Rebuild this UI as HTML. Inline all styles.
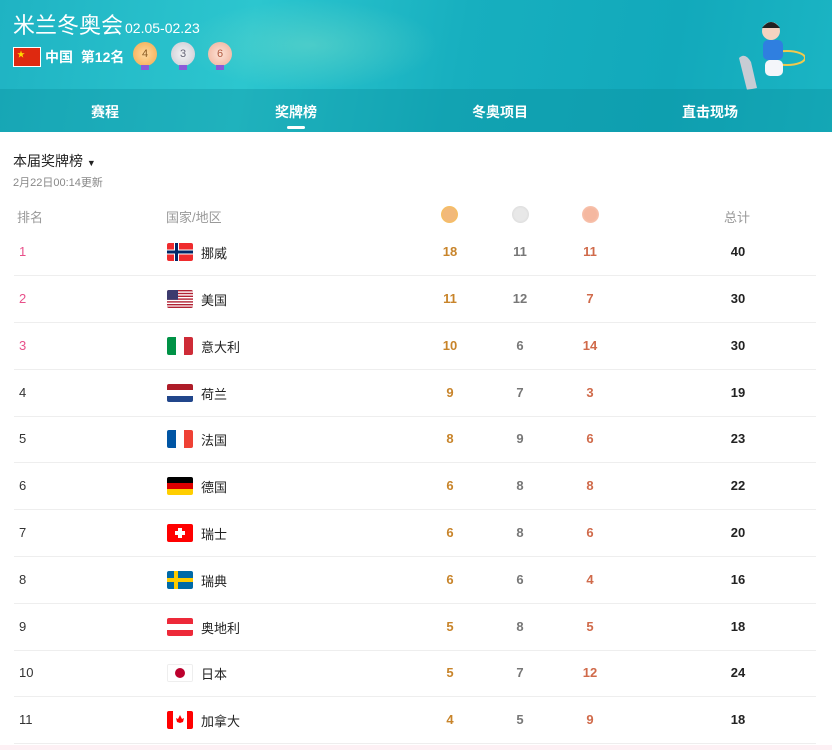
<!DOCTYPE html>
<html><head><meta charset="utf-8"><style>
*{margin:0;padding:0;box-sizing:border-box}
body{width:832px;height:750px;overflow:hidden;background:#fff;font-family:"Liberation Sans","Noto Sans CJK SC",sans-serif;position:relative}
.hd{position:absolute;left:0;top:0;width:832px;height:132px;background:linear-gradient(100deg,#1fb3c3 0%,#2cc6cf 30%,#17afbf 55%,#12a9bb 80%,#1bb5c4 100%)}
.hd:before{content:"";position:absolute;left:180px;top:0;width:260px;height:90px;background:radial-gradient(ellipse at center,rgba(120,220,200,.45),rgba(120,220,200,0) 70%)}
.title{position:absolute;left:13px;top:8px;color:#fff;font-size:22px}
.title small{font-size:14px;margin-left:2px}
.cn{position:absolute;left:13px;top:47px;width:28px;height:20px;background:#de2910;border:1px solid #fff}
.rank{position:absolute;left:45px;top:47px;color:#fff;font-size:14px;font-weight:bold}
.md{position:absolute;top:42px;width:24px;height:24px;border-radius:50%;font-size:11px;text-align:center;line-height:24px}
.md:after{content:"";position:absolute;left:8px;top:23px;width:8px;height:5px;background:#8a5bd8}
.tabs{position:absolute;left:0;top:89px;width:832px;height:43px;background:rgba(10,140,155,.35)}
.tab{position:absolute;top:102px;color:#fff;font-size:14px;font-weight:bold;width:120px;text-align:center}
.ul{position:absolute;left:287px;top:126px;width:18px;height:3px;background:#fff;border-radius:2px}
.fig{position:absolute;left:735px;top:18px;width:70px;height:72px}
.sel{position:absolute;left:13px;top:151px;font-size:14px;color:#222}
.upd{position:absolute;left:13px;top:174px;font-size:11px;color:#888}
.th{position:absolute;top:207px;font-size:13px;color:#999}
.row{position:absolute;left:14px;width:802px;height:47px;border-bottom:1px solid #eee;font-size:13px}
.row span{position:absolute;top:15px}
.r{left:5px;color:#333}
.n{left:187px;color:#222;top:14px!important}
.f{position:absolute;left:153px;top:14px;width:26px;height:18px;border-radius:2px;overflow:hidden}
.g,.s,.b,.t{width:40px;text-align:center;font-weight:bold}
.g{left:416px;color:#c8842a}.s{left:486px;color:#777}.b{left:556px;color:#d06a4a}.t{left:704px;color:#222}
</style></head><body>
<div class="hd"></div>
<div class="title">米兰冬奥会<small>02.05-02.23</small></div>
<div class="cn"><svg width="26" height="18"><text x="3" y="9" font-size="8" fill="#ffde00">★</text></svg></div>
<div class="rank">中国 &nbsp;第12名</div>
<div class="md" style="left:133px;background:radial-gradient(#ffd9a0,#f3a94a);color:#8a5a20">4</div>
<div class="md" style="left:171px;background:radial-gradient(#f4f4f6,#c8c8d0);color:#667">3</div>
<div class="md" style="left:208px;background:radial-gradient(#fde2d6,#eeaf98);color:#b05a40">6</div>
<svg class="fig" viewBox="0 0 70 72"><ellipse cx="52" cy="40" rx="18" ry="7" fill="none" stroke="#f2c94c" stroke-width="2"/><circle cx="36" cy="13" r="9" fill="#f5d3c0"/><path d="M27 10 Q36 -2 45 10 Z" fill="#222"/><rect x="28" y="22" width="20" height="20" rx="5" fill="#2f7fe0"/><rect x="30" y="42" width="18" height="16" rx="5" fill="#f4f6fa"/><path d="M4 40 Q10 34 16 44 L22 70 L12 72 Z" fill="#c8ccd4"/></svg>
<div class="tabs"></div>
<div class="tab" style="left:45px">赛程</div>
<div class="tab" style="left:236px">奖牌榜</div>
<div class="tab" style="left:440px">冬奥项目</div>
<div class="tab" style="left:650px">直击现场</div>
<div class="ul"></div>
<div class="sel">本届奖牌榜 <span style="font-size:9px">▼</span></div>
<div class="upd">2月22日00:14更新</div>
<div class="th" style="left:17px">排名</div>
<div class="th" style="left:166px">国家/地区</div>
<div style="position:absolute;left:441px;top:206px;width:17px;height:17px;border-radius:50%;background:radial-gradient(#f2b97a 50%,#fcc83a)"></div>
<div style="position:absolute;left:512px;top:206px;width:17px;height:17px;border-radius:50%;background:radial-gradient(#e8e8e8 50%,#d0d0d0)"></div>
<div style="position:absolute;left:582px;top:206px;width:17px;height:17px;border-radius:50%;background:radial-gradient(#f5b8a0 50%,#fbd2c2)"></div>
<div class="th" style="left:724px">总计</div>

<div class="row" style="top:229px"><span class="r" style="color:#e8508a">1</span><div class="f"><svg width="26" height="18"><rect width="26" height="18" fill="#ef2b2d"/><rect x="7" width="5" height="18" fill="#fff"/><rect y="6.5" width="26" height="5" fill="#fff"/><rect x="8" width="3" height="18" fill="#002868"/><rect y="7.5" width="26" height="3" fill="#002868"/></svg></div><span class="n">挪威</span><span class="g">18</span><span class="s">11</span><span class="b">11</span><span class="t">40</span></div>
<div class="row" style="top:276px"><span class="r" style="color:#e8508a">2</span><div class="f"><svg width="26" height="18"><rect width="26" height="18" fill="#fff"/><g fill="#b22234"><rect y="0" width="26" height="1.4"/><rect y="2.8" width="26" height="1.4"/><rect y="5.6" width="26" height="1.4"/><rect y="8.4" width="26" height="1.4"/><rect y="11.2" width="26" height="1.4"/><rect y="14" width="26" height="1.4"/><rect y="16.6" width="26" height="1.4"/></g><rect width="11" height="9.8" fill="#3c3b6e"/></svg></div><span class="n">美国</span><span class="g">11</span><span class="s">12</span><span class="b">7</span><span class="t">30</span></div>
<div class="row" style="top:323px"><span class="r" style="color:#e8508a">3</span><div class="f"><svg width="26" height="18"><rect width="9" height="18" fill="#009246"/><rect x="9" width="8" height="18" fill="#fff"/><rect x="17" width="9" height="18" fill="#ce2b37"/></svg></div><span class="n">意大利</span><span class="g">10</span><span class="s">6</span><span class="b">14</span><span class="t">30</span></div>
<div class="row" style="top:370px"><span class="r">4</span><div class="f"><svg width="26" height="18"><rect width="26" height="6" fill="#ae1c28"/><rect y="6" width="26" height="6" fill="#fff"/><rect y="12" width="26" height="6" fill="#21468b"/></svg></div><span class="n">荷兰</span><span class="g">9</span><span class="s">7</span><span class="b">3</span><span class="t">19</span></div>
<div class="row" style="top:416px"><span class="r">5</span><div class="f"><svg width="26" height="18"><rect width="9" height="18" fill="#0055a4"/><rect x="9" width="8" height="18" fill="#fff"/><rect x="17" width="9" height="18" fill="#ef4135"/></svg></div><span class="n">法国</span><span class="g">8</span><span class="s">9</span><span class="b">6</span><span class="t">23</span></div>
<div class="row" style="top:463px"><span class="r">6</span><div class="f"><svg width="26" height="18"><rect width="26" height="6" fill="#000"/><rect y="6" width="26" height="6" fill="#dd0000"/><rect y="12" width="26" height="6" fill="#ffce00"/></svg></div><span class="n">德国</span><span class="g">6</span><span class="s">8</span><span class="b">8</span><span class="t">22</span></div>
<div class="row" style="top:510px"><span class="r">7</span><div class="f"><svg width="26" height="18"><rect width="26" height="18" fill="#ff0000"/><rect x="11" y="4" width="4" height="10" fill="#fff"/><rect x="8" y="7" width="10" height="4" fill="#fff"/></svg></div><span class="n">瑞士</span><span class="g">6</span><span class="s">8</span><span class="b">6</span><span class="t">20</span></div>
<div class="row" style="top:557px"><span class="r">8</span><div class="f"><svg width="26" height="18"><rect width="26" height="18" fill="#006aa7"/><rect x="7" width="4" height="18" fill="#fecc00"/><rect y="7" width="26" height="4" fill="#fecc00"/></svg></div><span class="n">瑞典</span><span class="g">6</span><span class="s">6</span><span class="b">4</span><span class="t">16</span></div>
<div class="row" style="top:604px"><span class="r">9</span><div class="f"><svg width="26" height="18"><rect width="26" height="18" fill="#ed2939"/><rect y="6" width="26" height="6" fill="#fff"/></svg></div><span class="n">奥地利</span><span class="g">5</span><span class="s">8</span><span class="b">5</span><span class="t">18</span></div>
<div class="row" style="top:650px"><span class="r">10</span><div class="f" style="border:1px solid #eee"><svg width="24" height="16"><rect width="24" height="16" fill="#fff"/><circle cx="12" cy="8" r="5" fill="#bc002d"/></svg></div><span class="n">日本</span><span class="g">5</span><span class="s">7</span><span class="b">12</span><span class="t">24</span></div>
<div class="row" style="top:697px"><span class="r">11</span><div class="f"><svg width="26" height="18"><rect width="26" height="18" fill="#fff"/><rect width="6" height="18" fill="#ff0000"/><rect x="20" width="6" height="18" fill="#ff0000"/><path d="M13 4 L15 8 L17 7 L16 11 L13 12 L10 11 L9 7 L11 8 Z" fill="#ff0000"/></svg></div><span class="n">加拿大</span><span class="g">4</span><span class="s">5</span><span class="b">9</span><span class="t">18</span></div>
<div style="position:absolute;left:0;top:745px;width:832px;height:5px;background:#fdf0f4"></div>
</body></html>
